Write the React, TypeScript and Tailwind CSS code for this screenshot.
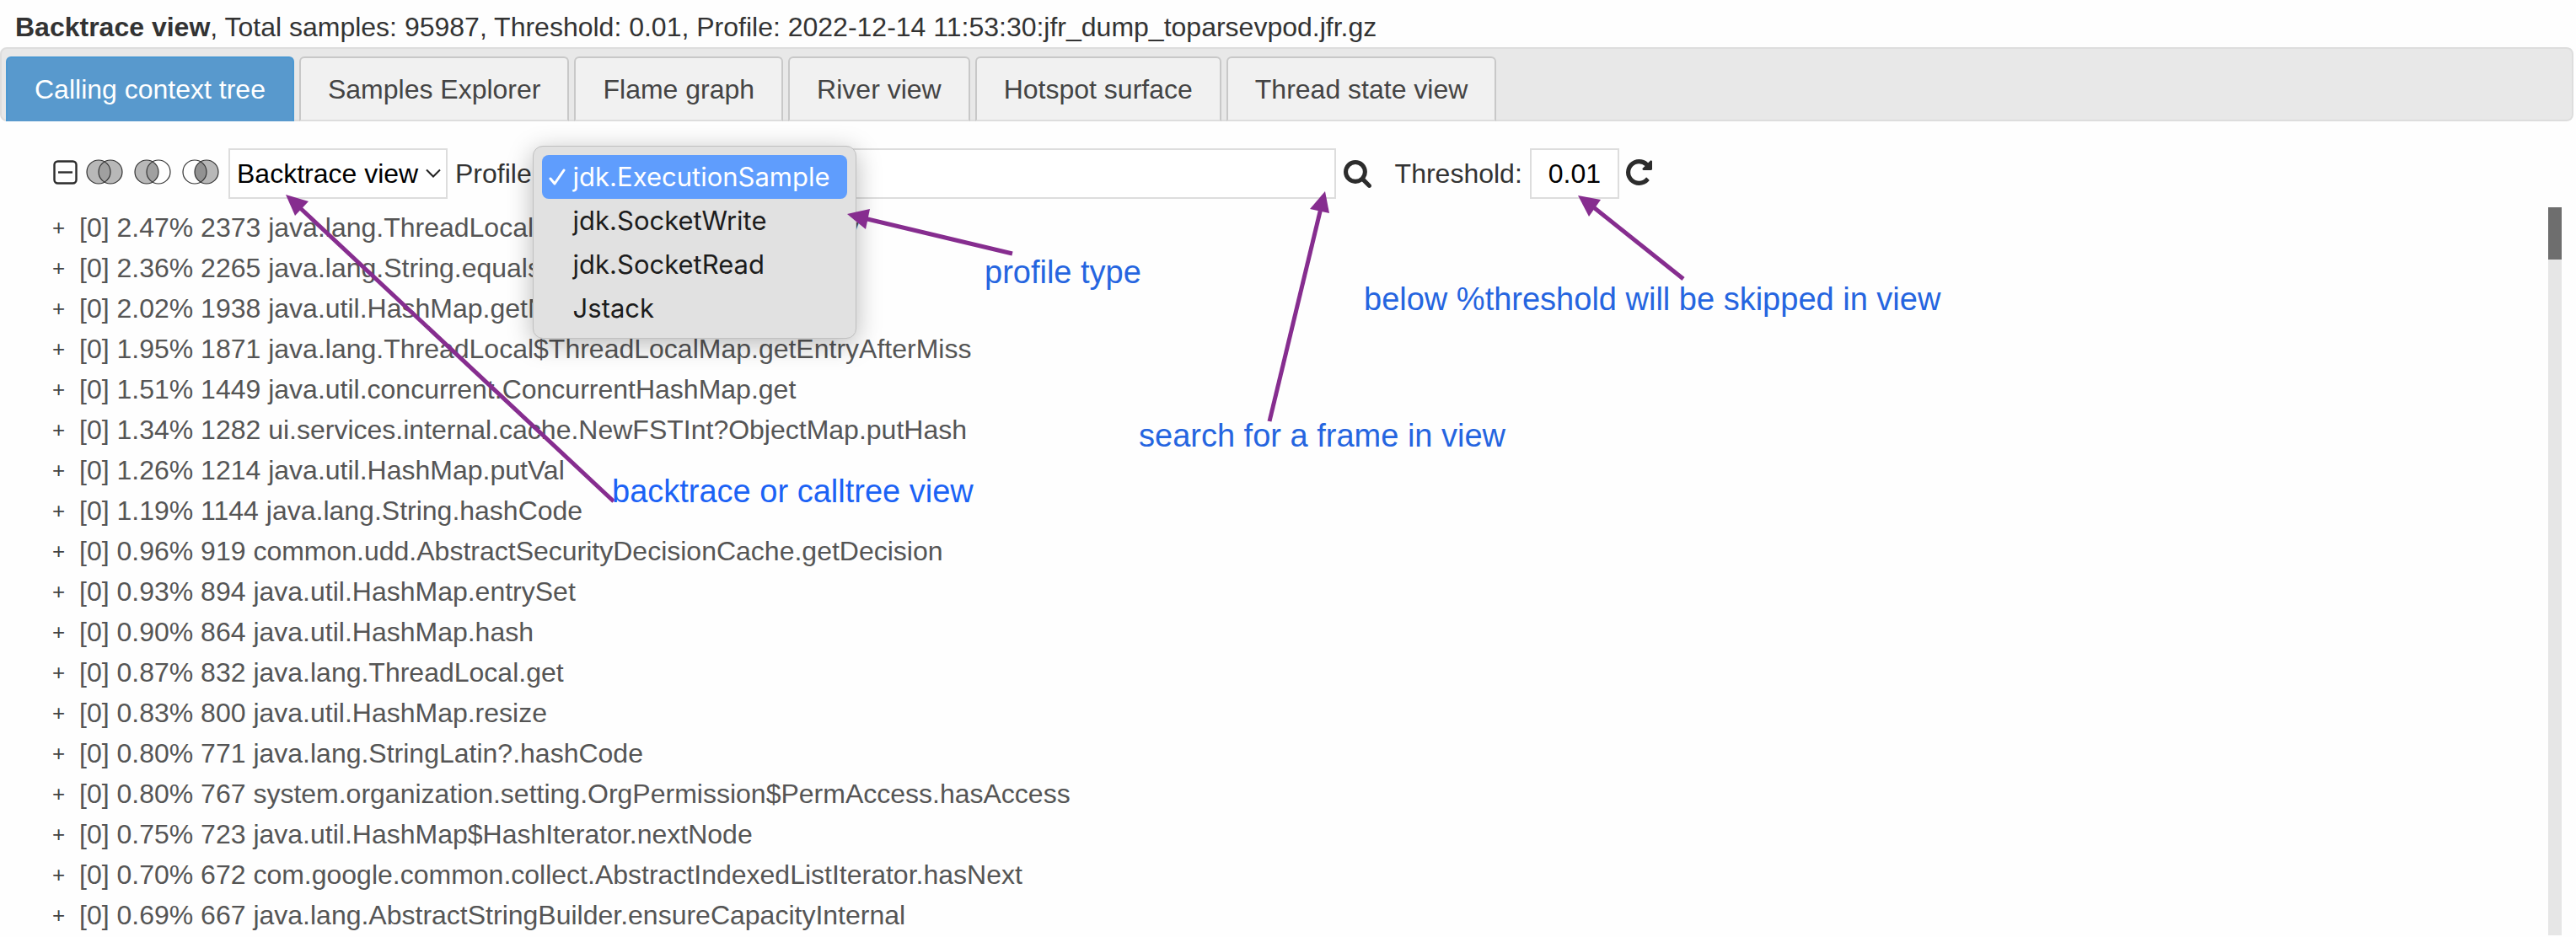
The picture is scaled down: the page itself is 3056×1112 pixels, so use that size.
import React from "react";

const tabs = [
  "Calling context tree",
  "Samples Explorer",
  "Flame graph",
  "River view",
  "Hotspot surface",
  "Thread state view",
];

const frames = [
  "[0] 2.47% 2373 java.lang.ThreadLocal$ThreadLocalMap.getEntry",
  "[0] 2.36% 2265 java.lang.String.equals",
  "[0] 2.02% 1938 java.util.HashMap.getNode",
  "[0] 1.95% 1871 java.lang.ThreadLocal$ThreadLocalMap.getEntryAfterMiss",
  "[0] 1.51% 1449 java.util.concurrent.ConcurrentHashMap.get",
  "[0] 1.34% 1282 ui.services.internal.cache.NewFSTInt?ObjectMap.putHash",
  "[0] 1.26% 1214 java.util.HashMap.putVal",
  "[0] 1.19% 1144 java.lang.String.hashCode",
  "[0] 0.96% 919 common.udd.AbstractSecurityDecisionCache.getDecision",
  "[0] 0.93% 894 java.util.HashMap.entrySet",
  "[0] 0.90% 864 java.util.HashMap.hash",
  "[0] 0.87% 832 java.lang.ThreadLocal.get",
  "[0] 0.83% 800 java.util.HashMap.resize",
  "[0] 0.80% 771 java.lang.StringLatin?.hashCode",
  "[0] 0.80% 767 system.organization.setting.OrgPermission$PermAccess.hasAccess",
  "[0] 0.75% 723 java.util.HashMap$HashIterator.nextNode",
  "[0] 0.70% 672 com.google.common.collect.AbstractIndexedListIterator.hasNext",
  "[0] 0.69% 667 java.lang.AbstractStringBuilder.ensureCapacityInternal",
];

const profiles = ["jdk.ExecutionSample", "jdk.SocketWrite", "jdk.SocketRead", "Jstack"];

function Venn({ left, right }: { left: boolean; right: boolean }) {
  return (
    <svg viewBox="0 0 44 30" className="h-[30px] w-[44px]" aria-hidden="true">
      <circle cx="15" cy="15" r="14" fill={left ? "#b8b8b8" : "#fefefe"} />
      <circle cx="29" cy="15" r="14" fill={right ? "#b8b8b8" : "#fefefe"} />
      <path d="M22 2.9a14 14 0 0 1 0 24.2a14 14 0 0 1 0-24.2z" fill={left ? "#a0a0a0" : "#929292"} />
      <circle cx="15" cy="15" r="14" fill="none" stroke="#333" strokeWidth="1.2" />
      <circle cx="29" cy="15" r="14" fill="none" stroke="#333" strokeWidth="1.2" />
    </svg>
  );
}

function Arrow({ line, head }: { line: string; head: string }) {
  return (
    <g>
      <path d={line} stroke="#862d8f" strokeWidth="5" />
      <polygon points={head} fill="#862d8f" />
    </g>
  );
}

export default function App() {
  return (
    <div className="relative h-screen overflow-hidden bg-[#fefefe] font-['Liberation_Sans',Arial,sans-serif] text-[32px] leading-[48px] text-[#333]">
      <header className="flex h-14 items-center px-[18px] pt-2">
        <h1 className="whitespace-pre">
          <b>Backtrace view</b>, Total samples: 95987, Threshold: 0.01, Profile: 2022-12-14 11:53:30:jfr_dump_toparsevpod.jfr.gz
        </h1>
      </header>

      <nav className="mr-[3px] flex h-[88px] items-stretch gap-[6px] rounded-lg border-2 border-[#dddddd] bg-[#e8e8e8] pt-[9px] pl-[5px]">
        {tabs.map((tab, i) => (
          <button
            key={tab}
            className={
              i === 0
                ? "-mb-[2px] rounded-t-md border-2 border-b-0 border-[#4b98d2] bg-[#5899cd] px-8 pb-[2px] text-white"
                : "-mb-[2px] rounded-t-md border-2 border-[#c8c8c8] border-b-[#dddddd] bg-[#f1f1f1] px-8 text-[#444]"
            }
          >
            {tab}
          </button>
        ))}
      </nav>

      <main className="pt-8">
        <form className="flex h-[60px] items-center pl-[62px]">
          <button type="button" aria-label="Collapse all" className="-mt-1">
            <svg viewBox="0 0 30 30" className="h-[30px] w-[30px]" fill="none" stroke="#2c2c2c" aria-hidden="true">
              <rect x="2.5" y="2.5" width="26" height="26" rx="4" strokeWidth="2.4" />
              <path d="M7 15.5h17" strokeWidth="2.4" />
            </svg>
          </button>
          <div className="-mt-1 ml-[10px] flex gap-[13px]">
            <button type="button" aria-label="Union"><Venn left right /></button>
            <button type="button" aria-label="Left only"><Venn left right={false} /></button>
            <button type="button" aria-label="Right only"><Venn left={false} right /></button>
          </div>
          <div className="relative ml-[11px]">
            <select
              aria-label="View"
              className="h-[60px] w-[260px] appearance-none border-2 border-[#dddddd] bg-white pl-2 text-black"
            >
              <option>Backtrace view</option>
              <option>Calltree view</option>
            </select>
            <svg viewBox="0 0 18 12" className="pointer-events-none absolute top-[24px] right-[8px] h-3 w-[18px]" fill="none" stroke="#222" strokeWidth="2" aria-hidden="true">
              <path d="M1 1.500l8 8l8-8" />
            </svg>
          </div>
          <label htmlFor="profile" className="ml-[9px]">Profile:</label>
          <div className="relative ml-2">
            <select id="profile" className="h-[60px] w-[347px] appearance-none border-2 border-[#dddddd] bg-white pl-[10px] text-black">
              {profiles.map((p) => (
                <option key={p}>{p}</option>
              ))}
            </select>
            <ul
              role="listbox"
              aria-label="Profile type"
              className="absolute -top-[3px] -left-4 z-10 h-[229px] w-[384px] rounded-xl border border-[#c0c0c0] bg-[#e1e1e1] p-[10px] font-['Inter',sans-serif] text-[31px] leading-[52px] text-[#1c1c1c] shadow-[0_6px_30px_rgba(0,0,0,0.28)]"
            >
              {profiles.map((p, i) => (
                <li
                  key={p}
                  role="option"
                  aria-selected={i === 0}
                  className={i === 0 ? "flex h-[52px] items-center rounded-lg bg-[#5f9dfd] text-white" : "flex h-[52px] items-center"}
                >
                  <span className="flex w-[37px] shrink-0 pl-2">
                    {i === 0 && (
                      <svg viewBox="0 0 20 20" className="h-5 w-5" fill="none" stroke="white" strokeWidth="3" strokeLinecap="round" strokeLinejoin="round" aria-hidden="true">
                        <path d="M2 12l5 6l11-16" />
                      </svg>
                    )}
                  </span>
                  {p}
                </li>
              ))}
            </ul>
          </div>
          <input aria-label="Search frame" className="ml-2 h-[60px] w-[582px] border-2 border-[#dddddd] bg-white px-5 text-black" />
          <button type="button" aria-label="Search" className="ml-[9px]">
            <svg viewBox="64 128 1664 1664" className="h-[33px] w-[33px]" fill="#2c2c2c" aria-hidden="true">
              <path d="M1216 832q0-185-131.5-316.5t-316.5-131.5-316.5 131.5-131.5 316.5 131.5 316.5 316.5 131.5 316.5-131.5 131.5-316.5zm512 832q0 52-38 90t-90 38q-54 0-90-38l-343-342q-179 124-399 124-143 0-273.5-55.5t-225-150-150-225-55.5-273.5 55.5-273.5 150-225 225-150 273.5-55.5 273.5 55.5 225 150 150 225 55.5 273.5q0 220-124 399l343 343q37 37 37 90z" />
            </svg>
          </button>
          <label htmlFor="threshold" className="ml-7">Threshold:</label>
          <input
            id="threshold"
            defaultValue="0.01"
            className="ml-[9px] h-[60px] w-[106px] border-2 border-[#dddddd] bg-white px-5 text-black"
          />
          <button type="button" aria-label="Reload" className="-mt-1 ml-2">
            <svg viewBox="128 128 1536 1536" className="h-[31px] w-[31px]" fill="#2c2c2c" aria-hidden="true">
              <path d="M1664 256v448q0 26-19 45t-45 19h-448q-42 0-59-40-17-39 14-69l138-138q-148-137-349-137-104 0-198.5 40.5t-163.5 109.5-109.5 163.5-40.5 198.5 40.5 198.5 109.5 163.5 163.5 109.5 198.5 40.5q119 0 225-52t179-147q7-10 23-12 15 0 25 9l137 138q9 8 9.500 20.500t-7.500 22.500q-109 132-264 204.500t-327 72.500q-156 0-298-61t-245-164-164-245-61-298 61-298 164-245 245-164 298-61q147 0 284.500 55.500t244.500 156.500l130-129q29-31 70-14 39 17 39 59z" />
            </svg>
          </button>
        </form>

        <section className="mt-[10px] mr-[17px] flex items-stretch justify-between">
          <ul className="pl-[62px] text-[#555]">
            {frames.map((frame) => (
              <li key={frame} className="flex h-12 items-center whitespace-nowrap">
                <button aria-label="Expand" className="w-8 text-left text-[26px] leading-[48px] text-[#444]">+</button>
                <span>{frame}</span>
              </li>
            ))}
          </ul>
          <div className="w-4 bg-[#e6e6e6]">
            <div className="h-[62px] bg-[#6e6e6e]" />
          </div>
        </section>
      </main>

      <div className="pointer-events-none absolute inset-0 z-20 text-[38px] leading-[44px] whitespace-nowrap text-[#2565e0]">
        <svg viewBox="0 0 3056 1112" className="absolute top-0 left-0 h-[1112px] w-[3056px]" fill="none" aria-hidden="true">
          <Arrow line="M352 243L728 595" head="339,231 366,239 350,256" />
          <Arrow line="M1025 259L1201 301" head="1005,254 1032,248 1027,272" />
          <Arrow line="M1567 247L1506 500" head="1572,227 1577,253 1554,248" />
          <Arrow line="M1888 244L1997 331" head="1872,232 1899,237 1885,257" />
        </svg>
        <p className="absolute top-[301px] left-[1168px]">profile type</p>
        <p className="absolute top-[333px] left-[1618px]">below %threshold will be skipped in view</p>
        <p className="absolute top-[495px] left-[1351px]">search for a frame in view</p>
        <p className="absolute top-[561px] left-[726px] text-[#1b62f5]">backtrace or calltree view</p>
      </div>
    </div>
  );
}
